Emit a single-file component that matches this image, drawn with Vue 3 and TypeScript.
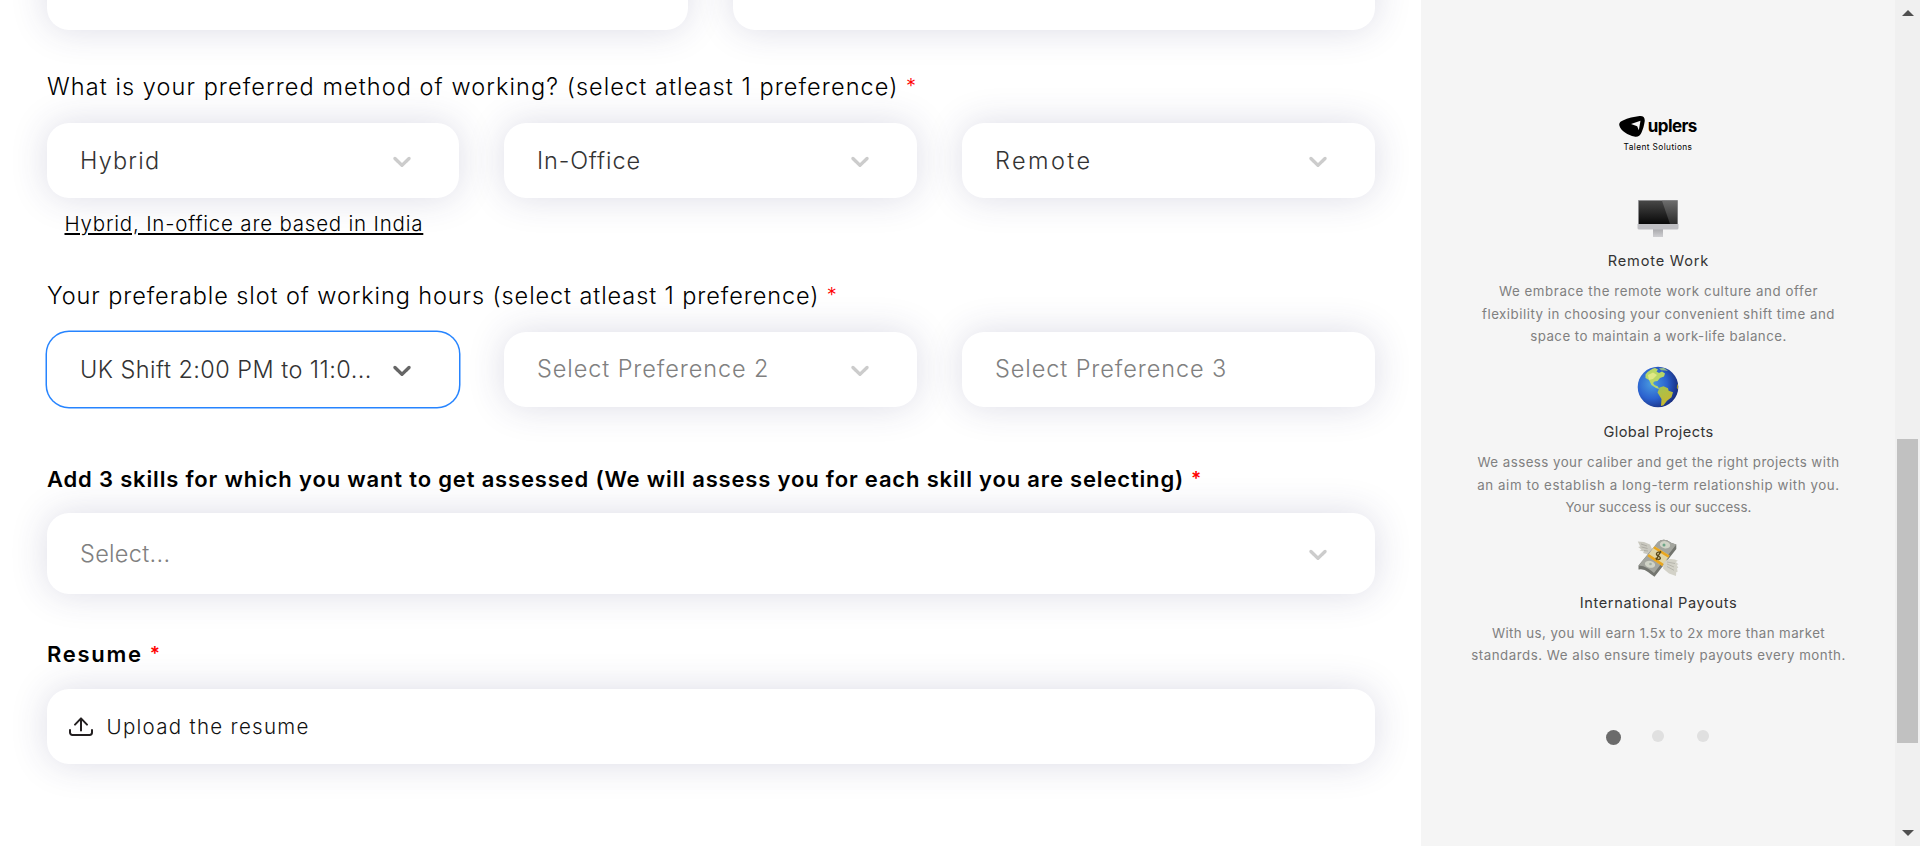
<script setup lang="ts">
interface Txt { text: string; ls: number }
interface Field extends Txt { kind: 'value' | 'placeholder'; chevron: boolean; focused?: boolean }
interface Perk { icon: 'monitor' | 'globe' | 'money'; title: Txt; lines: Txt[] }

const px = (n: number) => ({ letterSpacing: `${n}px` })

const methods: Field[] = [
  { text: 'Hybrid', ls: 1.2, kind: 'value', chevron: true },
  { text: 'In-Office', ls: 0.85, kind: 'value', chevron: true },
  { text: 'Remote', ls: 2.4, kind: 'value', chevron: true },
]
const slots: Field[] = [
  { text: 'UK Shift 2:00 PM to 11:0...', ls: 0.44, kind: 'value', chevron: true, focused: true },
  { text: 'Select Preference 2', ls: 0.9, kind: 'placeholder', chevron: true },
  { text: 'Select Preference 3', ls: 0.9, kind: 'placeholder', chevron: false },
]
const perks: Perk[] = [
  {
    icon: 'monitor',
    title: { text: 'Remote Work', ls: 0.8 },
    lines: [
      { text: 'We embrace the remote work culture and offer', ls: 0.58 },
      { text: 'flexibility in choosing your convenient shift time and', ls: 0.51 },
      { text: 'space to maintain a work-life balance.', ls: 0.48 },
    ],
  },
  {
    icon: 'globe',
    title: { text: 'Global Projects', ls: 0.4 },
    lines: [
      { text: 'We assess your caliber and get the right projects with', ls: 0.46 },
      { text: 'an aim to establish a long-term relationship with you.', ls: 0.57 },
      { text: 'Your success is our success.', ls: 0.13 },
    ],
  },
  {
    icon: 'money',
    title: { text: 'International Payouts', ls: 0.62 },
    lines: [
      { text: 'With us, you will earn 1.5x to 2x more than market', ls: 0.43 },
      { text: 'standards. We also ensure timely payouts every month.', ls: 0.51 },
    ],
  },
]
const chevron =
  'M4.516 7.548c0.436-0.446 1.043-0.481 1.576 0l3.908 3.747 3.908-3.747c0.533-0.481 1.141-0.446 1.574 0 0.436 0.445 0.408 1.197 0 1.615-0.406 0.418-4.695 4.502-4.695 4.502-0.217 0.223-0.502 0.335-0.787 0.335s-0.57-0.112-0.789-0.335c0 0-4.287-4.084-4.695-4.502s-0.436-1.17 0-1.615z'
</script>

<template>
  <div class="page">
    <main class="form">
      <div class="row two">
        <div class="field"></div>
        <div class="field"></div>
      </div>

      <div class="label l1">
        <span :style="px(1.07)">What is your preferred method of working? (select atleast 1 preference)</span><i class="req">*</i>
      </div>
      <div class="row three">
        <div v-for="f in methods" :key="f.text" class="field">
          <span :class="f.kind" :style="px(f.ls)">{{ f.text }}</span>
          <svg v-if="f.chevron" class="chev" viewBox="0 0 20 20"><path :d="chevron" /></svg>
        </div>
      </div>
      <div class="hint"><span :style="px(0.79)">Hybrid, In-office are based in India</span></div>

      <div class="label l2">
        <span :style="px(0.9)">Your preferable slot of working hours (select atleast 1 preference)</span><i class="req">*</i>
      </div>
      <div class="row three">
        <div v-for="f in slots" :key="f.text" class="field" :class="{ focused: f.focused }">
          <span :class="f.kind" :style="px(f.ls)">{{ f.text }}</span>
          <svg v-if="f.chevron" class="chev" viewBox="0 0 20 20"><path :d="chevron" /></svg>
        </div>
      </div>

      <div class="label strong l3">
        <span :style="px(0.83)">Add 3 skills for which you want to get assessed (We will assess you for each skill you are selecting)</span><i class="req">*</i>
      </div>
      <div class="field skills">
        <span class="placeholder low" :style="px(0.3)">Select...</span>
        <svg class="chev" viewBox="0 0 20 20"><path :d="chevron" /></svg>
      </div>

      <div class="label strong l4"><span :style="px(1.7)">Resume</span><i class="req">*</i></div>
      <div class="field upload">
        <svg class="up" viewBox="0 0 24 20" fill="none" stroke="#231f20" stroke-width="2" stroke-linecap="round" stroke-linejoin="round">
          <path d="M1 13v2.6a2.4 2.4 0 0 0 2.4 2.4h17.2a2.4 2.4 0 0 0 2.4-2.4V13M12 13.5V1.4M6 7.6l6-6.2 6 6.2" />
        </svg>
        <span :style="px(1.3)">Upload the resume</span>
      </div>
    </main>

    <aside class="side">
      <div class="brand">
        <svg class="mark" viewBox="0 0 26 21">
          <path d="M.3 9.2C-.2 6.900 1.400 5.300 3.900 4.400 9 2.300 15 .8 20.500.1c3.600-.4 5.600 1.500 5.200 5.100-.5 4.200-1.800 8.300-3.400 11.900-1.300 2.900-3.600 4.200-7 3.500C9.500 19.200 1.300 14.800.3 9.200z" />
          <path d="M12 8 21.500 4.800 19.800 14.200 18.200 10.200z" fill="#f5f5f5" />
        </svg>
        <span class="name">uplers</span>
      </div>
      <div class="tag">Talent Solutions</div>

      <section v-for="p in perks" :key="p.title.text" class="perk">
        <svg v-if="p.icon === 'monitor'" class="pic" viewBox="0 0 42 42">
          <defs>
            <linearGradient id="scr" x1="0" y1="0" x2="0" y2="1"><stop offset="0" stop-color="#474747" /><stop offset="1" stop-color="#080808" /></linearGradient>
            <linearGradient id="gls" x1="0" y1="0" x2="0" y2="1"><stop offset="0" stop-color="#6c6c6c" /><stop offset="1" stop-color="#2b2b2b" /></linearGradient>
            <linearGradient id="std" x1="0" y1="0" x2="0" y2="1"><stop offset="0" stop-color="#a9a9ac" /><stop offset="1" stop-color="#cfcfd2" /></linearGradient>
          </defs>
          <path d="M16 34h10v8H16z" fill="url(#std)" />
          <path d="M1 5h40v25H1z" fill="#a6a6a9" />
          <path d="M1.800 5.800h38.400V29H1.800z" fill="url(#scr)" />
          <path d="M25 5.800h15.200V29H33z" fill="url(#gls)" />
          <path d="M.5 29h41v4q0 1.500-1.500 1.500H2Q.5 34.500.5 33z" fill="#bfbfc3" />
        </svg>
        <svg v-else-if="p.icon === 'globe'" class="pic" viewBox="0 0 42 42">
          <defs>
            <radialGradient id="sea" cx=".35" cy=".42" r=".68"><stop offset="0" stop-color="#4a9ce0" /><stop offset=".55" stop-color="#2b62cf" /><stop offset="1" stop-color="#182a78" /></radialGradient>
            <linearGradient id="land" x1="0" y1="0" x2=".5" y2="1"><stop offset="0" stop-color="#9fc456" /><stop offset="1" stop-color="#c9b62c" /></linearGradient>
          </defs>
          <circle cx="21" cy="21" r="20.300" fill="url(#sea)" />
          <path d="M8.500 8.500C11 5 15 2.500 18 2l3 1.500-1.500 2L22 7l3-1.500 3 2-1 3-4 1.500-2.500 3-3 .5-1.500 1.500 1.500 2 3.500 1.500 1 2.500-3-1-4.500-3-2.500-5-3.500-2z" fill="#b9d766" />
          <path d="M22 2.200l5-.2 4 3-3-.5-4-.3z" fill="#93b98d" />
          <path d="M11 9l5-2.500L20 9l-4 4-4 1z" fill="#dfe887" />
          <path d="M22.500 21.500l4-1.200 4.500 2 .6 2.500 4.400 1.500-1.500 5-4.500 3.500-3.500 4.500-2.500.6.5-7-4-6.500z" fill="url(#land)" />
          <path d="M40.200 17.500l1 2.500-.4 3.500-1-1.500z" fill="#a99a2c" />
        </svg>
        <svg v-else class="pic" viewBox="0 0 42 42">
          <path d="M.8 4.500 7 5l6 2.500 2 4.500-3.500 5.500L6 16l1-1.500-4.500-.9 2-1-3.300-2.600 2-.5z" fill="#c9c8bf" />
          <path d="M4 7l6 2M4.500 10l6 1.500M7 13.500l4 .5" stroke="#a09f98" stroke-width=".7" />
          <path d="M1.500 28.500 21 5q4-3.500 9.500-1.500 4 3.200 8.800 4v4.500L17.500 39.800q-3.500-2.400-6.500-4.800-4-3.500-9.500-2.500z" fill="#73756f" />
          <path d="M1.500 28.500 21 5q4-3.500 9.500-1.500 4 3.200 8.800 4L17 36q-3-2.500-6-4.500-4.500-3-9.500-3z" fill="#a3a59e" />
          <ellipse cx="28" cy="7.800" rx="5.200" ry="3.600" transform="rotate(12 28 7.800)" fill="#d0d3c6" />
          <ellipse cx="13" cy="27.300" rx="5.200" ry="3.400" transform="rotate(12 13 27.300)" fill="#d0d3c6" />
          <circle cx="27" cy="8" r="1.500" fill="#6da688" /><circle cx="13.500" cy="27" r="1.300" fill="#a3b0a2" />
          <path d="M17.500 9.300 32.500 18.500 25.500 29 10.500 19z" fill="#e0d5a6" />
          <path d="M17.500 9.300l15 9.200-1.300 2.200-15-9.500zM11.800 16.900l14.800 9.900-1.300 2.400-14.800-10z" fill="#e9a61f" />
          <path d="M24 16.200c-1.500-2-4.500-1-4.600.8-.1 2 4.500 2.200 4 4.300-.5 1.700-3.800 1.500-4.700-.6M23.800 14l-4.600 9" fill="none" stroke="#5b4a18" stroke-width="1.400" />
          <path d="M27 25.500q2.500-3.500 6.500-3.500 5 .2 7.500 1.700l-2.200 1.300 2.700 2.200-1.700.8 1.500 2.700-1.200.6.500 3.500-1.400.4-.2 3.800L32 36.500 26 31.500z" fill="#d3d2c8" />
          <path d="M30 27l7 3M30 29.500l7 3.800M30 25l8 1.500" stroke="#aaa9a1" stroke-width=".7" />
        </svg>
        <h3 :style="px(p.title.ls)">{{ p.title.text }}</h3>
        <p>
          <span v-for="l in p.lines" :key="l.text" :style="px(l.ls)">{{ l.text }}</span>
        </p>
      </section>

      <div class="dots"><b class="on"></b><b></b><b></b></div>
    </aside>

    <div class="scroll">
      <svg viewBox="0 0 12 6"><path d="M0 6 6 0l6 6z" /></svg>
      <div class="track"><div class="thumb"></div></div>
      <svg viewBox="0 0 12 6"><path d="M0 0h12L6 6z" /></svg>
    </div>
  </div>
</template>

<style>
html, body { margin: 0; background: #fff; overflow: hidden; }
</style>

<style scoped>
.page {
  display: flex;
  width: 1920px;
  height: 846px;
  overflow: hidden;
  font-family: "Inter", "Liberation Sans", sans-serif;
  background: #fff;
  box-sizing: border-box;
}
.form {
  width: 1421px;
  flex: none;
  padding: 0 46px 0 47px;
  box-sizing: border-box;
}
.row { display: grid; column-gap: 45px; }
.two { grid-template-columns: 641px 642px; margin-top: -45px; }
.three { grid-template-columns: 412px 413px 413px; }
.field {
  display: flex;
  align-items: center;
  justify-content: space-between;
  height: 75px;
  padding: 0 42px 0 33px;
  box-sizing: border-box;
  border-radius: 22px;
  background: #fff;
  box-shadow: 0 0 36px rgba(45, 46, 105, 0.17);
  font-size: 23.5px;
  font-weight: 300;
  line-height: 28px;
  white-space: nowrap;
}
.focused { box-shadow: 0 0 0 1.5px #2684ff; }
.value { color: #333; padding-bottom: 0; }
.placeholder { color: #808080; padding-bottom: 2px; }
.low { padding: 0; }
.chev { width: 30px; height: 30px; flex: none; fill: #ccc; }
.focused .chev { fill: #666; }
.label {
  display: flex;
  height: 30px;
  line-height: 30px;
  font-size: 23.5px;
  font-weight: 300;
  color: #000;
  white-space: nowrap;
}
.strong { font-size: 22px; font-weight: 600; }
.req { color: #f00; font-size: 20px; line-height: 28px; font-style: normal; margin-left: 7.5px; }
.strong .req { font-size: 19px; line-height: 30px; margin-left: 7px; }
.l1 { margin: 42px 0 21px; }
.l2 { margin: 44px 0 21px; }
.l3 { margin: 57px 0 19px; }
.l4 { margin: 45px 0 20px; }
.hint {
  height: 26px;
  margin: 13px 0 0 17.5px;
  line-height: 26px;
  font-size: 20.5px;
  font-weight: 300;
  color: #000;
  white-space: nowrap;
}
.hint span { text-decoration: underline; text-decoration-thickness: 2px; text-underline-offset: 2px; }
.skills { height: 81px; }
.upload { justify-content: flex-start; padding-left: 22px; font-size: 20.5px; line-height: 25px; color: #111; gap: 13.5px; }
.up { width: 24px; height: 20px; flex: none; }

.side {
  width: 474px;
  flex: none;
  display: flex;
  flex-direction: column;
  align-items: center;
  background: #f5f5f5;
  text-align: center;
}
.brand { display: flex; gap: 2.5px; height: 22px; margin-top: 116px; }
.mark { width: 26px; height: 21px; }
.name { font-size: 17px; line-height: 20px; font-weight: 700; letter-spacing: -0.6px; }
.tag { height: 12px; line-height: 12px; margin: 3px 0 42px; font-size: 8.3px; letter-spacing: 0.4px; color: #000; }
.perk { height: 170.75px; display: flex; flex-direction: column; align-items: center; }
.pic { width: 42px; height: 42px; flex: none; }
h3 { margin: 13px 0 8.25px 1px; font-size: 14.6px; line-height: 22px; font-weight: 400; color: #333; white-space: nowrap; }
p { margin: 0 0 0 1px; font-size: 13.3px; line-height: 22.5px; color: #808080; white-space: nowrap; }
p span { display: block; }
.dots { display: flex; width: 103px; margin: 22.75px 2px 0 0; align-items: flex-start; justify-content: space-between; }
.dots b { width: 12px; height: 12px; border-radius: 50%; background: #e0e0e0; }
.dots .on { width: 15px; height: 15px; background: #6b6b6b; margin-right: -1px; }

.scroll {
  width: 25px;
  flex: none;
  display: flex;
  flex-direction: column;
  align-items: center;
  padding: 10px 0;
  box-sizing: border-box;
  background: #f0f0f0;
}
.scroll svg { width: 12px; height: 6px; fill: #505050; flex: none; }
.track { flex: 1; padding-top: 423px; }
.thumb { width: 21px; height: 304px; background: #c1c1c1; }
</style>
